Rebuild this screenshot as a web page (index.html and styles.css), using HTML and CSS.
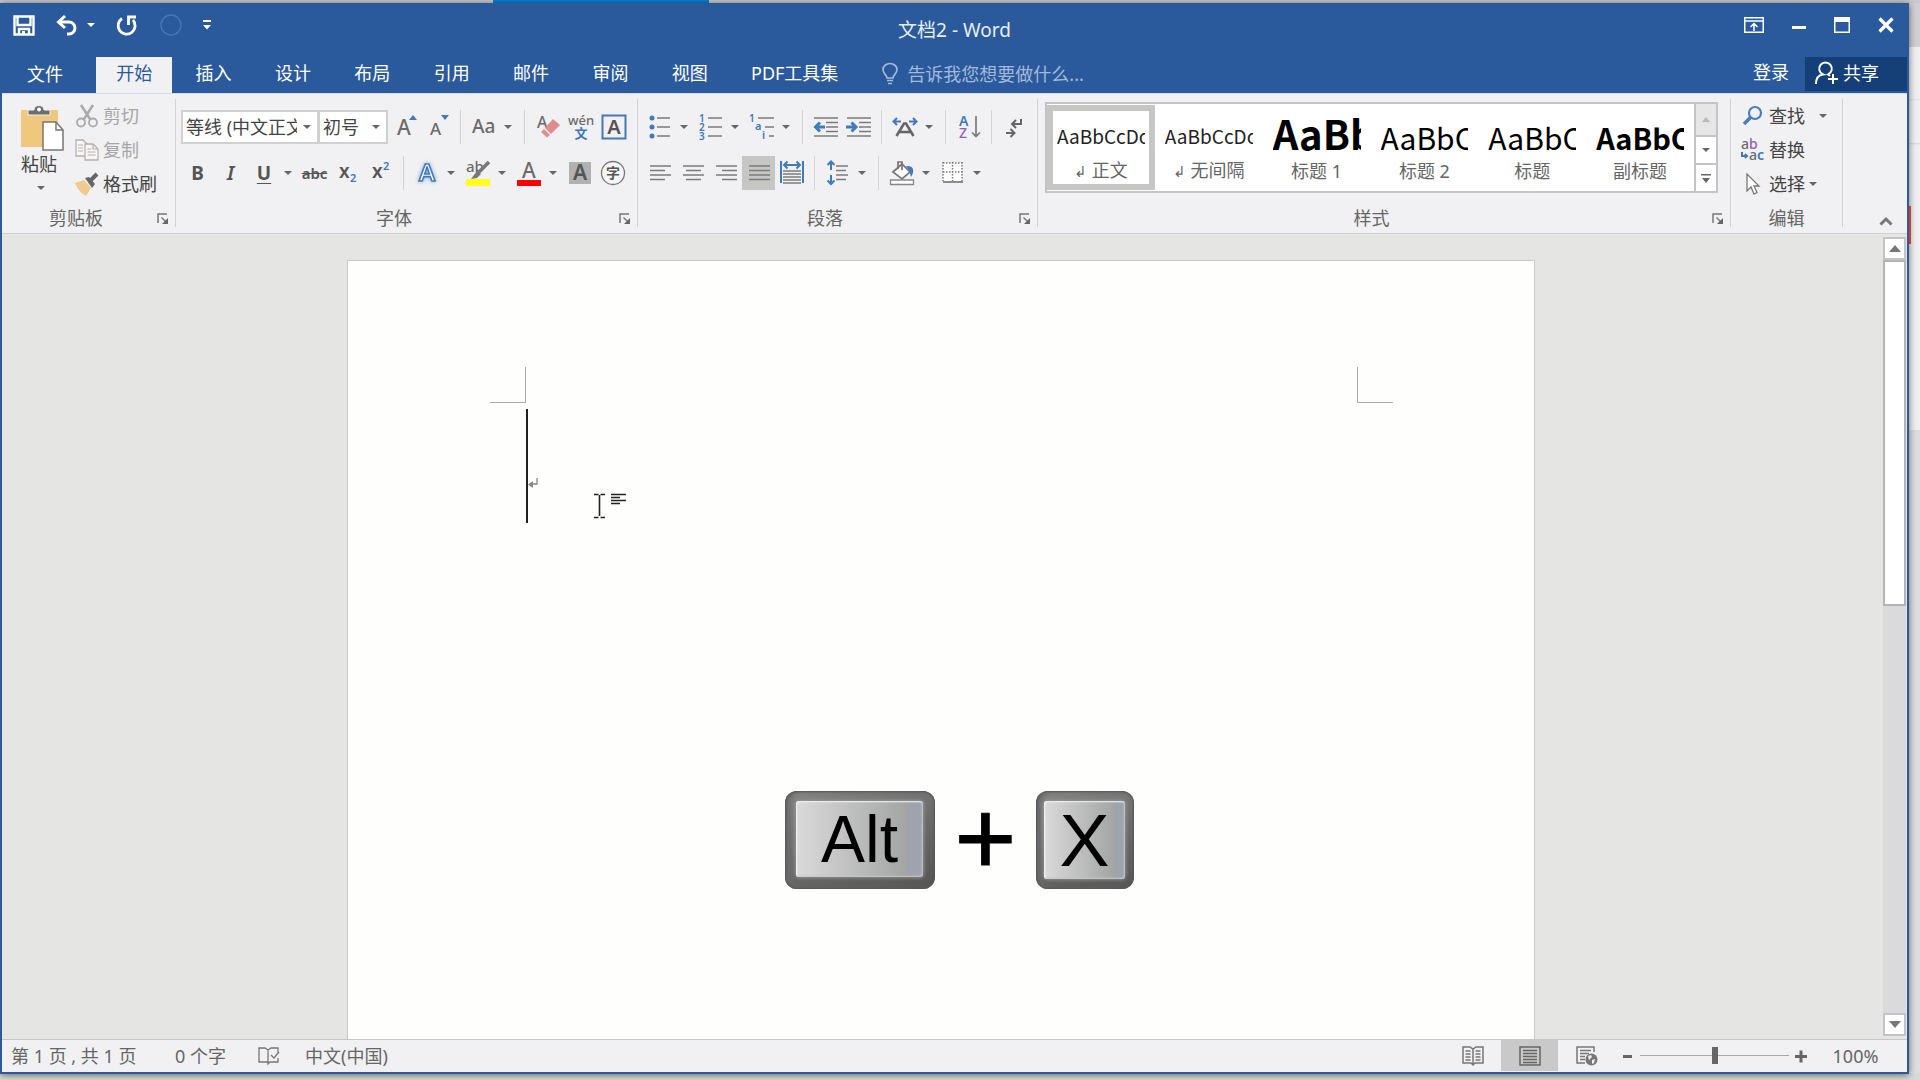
FILE: index.html
```html
<!DOCTYPE html>
<html lang="zh-CN">
<head>
<meta charset="utf-8">
<title>文档2 - Word</title>
<link rel="stylesheet" href="styles.css">
</head>
<body>
<svg class="sprite" aria-hidden="true">
  <symbol id="caret" viewBox="0 0 8 4"><path d="M0 0h8L4 4z"/></symbol>
  <symbol id="launcher" viewBox="0 0 11 11"><path d="M1 10V1h9" fill="none" stroke="#777" stroke-width="1.5"/><path d="M4.500 4.500l4 4" stroke="#777" stroke-width="1.500"/><path d="M11 5v6H5z" fill="#666"/></symbol>
</svg>

<div class="window">
  <header class="titlebar">
    <div class="quick">
      <button class="qbtn" aria-label="保存"><svg width="22" height="21" viewBox="0 0 22 21"><path d="M1.500 1.500h19v18h-19z M4.500 2v8h13V2 M6 19v-5h10v5" fill="none" stroke="#fff" stroke-width="2.400"/><path d="M9 16h3v4H9z" fill="#fff"/></svg></button>
      <button class="qbtn undo" aria-label="撤消"><svg width="22" height="20" viewBox="0 0 22 20"><path d="M2 7h11a6 6 0 0 1 0 12h-2" fill="none" stroke="#fff" stroke-width="3"/><path d="M9 1L2.500 7L9 13" fill="none" stroke="#fff" stroke-width="3"/></svg><svg class="qcaret" width="8" height="4"><use href="#caret"/></svg></button>
      <button class="qbtn" aria-label="重复"><svg width="22" height="21" viewBox="0 0 22 21"><path d="M6 3.500A8.500 8.500 0 1 0 17 5" fill="none" stroke="#fff" stroke-width="2.800"/><path d="M12.500 10V2H20" fill="none" stroke="#fff" stroke-width="2.800"/></svg></button>
      <button class="qbtn dim" aria-label="触摸模式"><svg width="22" height="22"><circle cx="11" cy="11" r="10" fill="none" stroke="#4a74b3" stroke-width="1.500"/></svg></button>
      <button class="qbtn last" aria-label="自定义快速访问工具栏"><svg width="8" height="10" viewBox="0 0 8 10"><path d="M0 0h8v2H0z M0 5h8L4 9.500z" fill="#fff"/></svg></button>
    </div>
    <h1 class="doc-title">文档2 - Word</h1>
    <div class="winctl">
      <button class="wbtn" aria-label="功能区显示选项"><svg width="20" height="16" viewBox="0 0 20 16"><path d="M.750 .750h18.500v14.500H.750z M1 4h18 M10 14V7 M6.500 10L10 6.500L13.500 10" fill="none" stroke="#fff" stroke-width="1.500"/></svg></button>
      <button class="wbtn" aria-label="最小化"><svg width="14" height="16"><path d="M0 9h14v3H0z" fill="#fff"/></svg></button>
      <button class="wbtn" aria-label="最大化"><svg width="16" height="16"><path d="M.750 .750h14.500v14.500H.750z" fill="none" stroke="#fff" stroke-width="1.500"/><path d="M0 0h16v5H0z" fill="#fff"/></svg></button>
      <button class="wbtn" aria-label="关闭"><svg width="16" height="16"><path d="M1.500 1.500l13 13M14.500 1.500l-13 13" stroke="#fff" stroke-width="3.200"/></svg></button>
    </div>
  </header>

  <nav class="tabrow">
    <button class="file-tab">文件</button>
    <div class="tabs">
      <button class="tab active">开始</button><button class="tab">插入</button><button class="tab">设计</button><button class="tab">布局</button><button class="tab">引用</button><button class="tab">邮件</button><button class="tab">审阅</button><button class="tab">视图</button>
    </div>
    <button class="tab pdf">PDF工具集</button>
    <label class="tellme"><svg width="16" height="22" viewBox="0 0 16 22"><path d="M5 15c0-3-4-4-4-8.500a7 6 0 0 1 14 0C15 11 11 12 11 15z M5 17.500h6 M6 20.500h4" fill="none" stroke="#a3b9da" stroke-width="1.700"/></svg><input type="text" placeholder="告诉我您想要做什么..."></label>
    <a class="login" href="#">登录</a>
    <button class="share"><svg width="24" height="24" viewBox="0 0 24 24"><path d="M1 23c0-6 3-9 7-9.500a6.300 6.300 0 1 1 5 0l2 1.500 M18 13v10 M13 18h10" fill="none" stroke="#fff" stroke-width="2"/></svg>共享</button>
  </nav>

  <div class="ribbon">
    <section class="group clipboard">
      <div class="group-body">
        <button class="paste"><svg width="44" height="46" viewBox="0 0 44 46"><path d="M0 5h37v37H0z" fill="#efc77d"/><path d="M7 10V5h6c0-6 10-6 10 0h6v5z" fill="#6d6d6d" stroke="#f1f1f3"/><circle cx="18" cy="4.500" r="2" fill="#fff"/><path d="M22 17h13l7 8v20H22z" fill="#fff" stroke="#777" stroke-width="1.500"/><path d="M35 17v8h7" fill="none" stroke="#777" stroke-width="1.500"/></svg><span>粘贴</span><svg class="caret" width="8" height="4"><use href="#caret"/></svg></button>
        <div class="clip-list">
          <button class="cmd off"><svg width="24" height="24" viewBox="0 0 24 24"><path d="M6 1l9 14M18 1L9 15" stroke="#aaa" stroke-width="2.500"/><circle cx="6" cy="18.500" r="4" fill="none" stroke="#aaa" stroke-width="1.800"/><circle cx="18" cy="18.500" r="4" fill="none" stroke="#aaa" stroke-width="1.800"/></svg>剪切</button>
          <button class="cmd off"><svg width="24" height="24" viewBox="0 0 24 24"><g fill="#fbf6f6" stroke="#b4b0b0" stroke-width="1.300"><path d="M1 2h7l4 4v12H1z"/><path d="M10 6h8l5 5v11H10z"/></g><path d="M18 6v5h5 M3 7h5M3 10h5M3 13h5 M12.500 11h4M12.500 14h8M12.500 17h8" fill="none" stroke="#b4b0b0" stroke-width="1.200"/></svg>复制</button>
          <button class="cmd"><svg width="24" height="24" viewBox="0 0 24 24"><path d="M0 11l9-3 7 8-5 8C7 22 2 17 0 11z" fill="#efcb8f"/><path d="M10 6l4-1 6 7-3 4z" fill="#666"/><path d="M15 9l7-7" stroke="#666" stroke-width="4"/></svg>格式刷</button>
        </div>
      </div>
      <footer class="group-foot"><h2>剪贴板</h2><button class="launcher" aria-label="剪贴板设置"><svg width="11" height="11"><use href="#launcher"/></svg></button></footer>
    </section>

    <section class="group font">
      <div class="group-body rows">
        <div class="toolrow">
          <div class="combo family"><select aria-label="字体"><option>等线 (中文正文)</option></select><svg class="caret" width="8" height="4"><use href="#caret"/></svg></div>
          <div class="combo size"><select aria-label="字号"><option>初号</option></select><svg class="caret" width="8" height="4"><use href="#caret"/></svg></div>
          <button class="tool first" aria-label="增大字号"><svg width="26" height="26"><text x="1" y="21" font-size="21" class="g">A</text><path d="M13 6h8l-4-5z" class="bf"/></svg></button>
          <button class="tool narrow" aria-label="减小字号"><svg width="26" height="26"><text x="3" y="21" font-size="17" class="g">A</text><path d="M14 1h8l-4 5z" class="bf"/></svg></button>
          <i class="sep"></i>
          <button class="split" aria-label="更改大小写"><svg width="26" height="26"><text x="1" y="19" font-size="19" class="g">Aa</text></svg><svg class="caret" width="8" height="4"><use href="#caret"/></svg></button>
          <i class="sep"></i>
          <button class="tool" aria-label="清除格式"><svg width="26" height="26"><text x="2" y="14" font-size="16" class="g">A</text><path d="M18 5l7 6-9 9-6-6z M9 15l6 6-3 2.500L6 18z" fill="#e08c8c"/></svg></button>
          <button class="tool" aria-label="拼音指南"><svg width="26" height="26"><text x="13" y="11" font-size="13" text-anchor="middle" class="g">wén</text><text x="13" y="24" font-size="13" text-anchor="middle" class="b">文</text></svg></button>
          <button class="tool" aria-label="字符边框"><svg width="26" height="26"><path d="M1.500 1.500h23v23h-23z" class="bs" fill="#f6f6f8"/><text x="13" y="20" font-size="20" text-anchor="middle" class="d">A</text></svg></button>
        </div>
        <div class="toolrow">
          <button class="tool" aria-label="加粗"><span class="glyph bold">B</span></button>
          <button class="tool" aria-label="倾斜"><span class="glyph ital">I</span></button>
          <button class="split" aria-label="下划线"><span class="glyph under">U</span><svg class="caret" width="8" height="4"><use href="#caret"/></svg></button>
          <button class="tool" aria-label="删除线"><span class="glyph strike">abc</span></button>
          <button class="tool" aria-label="下标"><svg width="26" height="26"><text x="4" y="18" font-size="19" class="d">x</text><text x="15" y="22" font-size="11" class="b">2</text></svg></button>
          <button class="tool" aria-label="上标"><svg width="26" height="26"><text x="4" y="18" font-size="19" class="d">x</text><text x="15" y="10" font-size="11" class="b">2</text></svg></button>
          <i class="sep"></i>
          <button class="split" aria-label="文本效果"><svg width="26" height="26"><text x="13" y="21" font-size="24" text-anchor="middle" class="glow">A</text></svg><svg class="caret" width="8" height="4"><use href="#caret"/></svg></button>
          <button class="split" aria-label="突出显示"><svg width="26" height="26"><text x="1" y="12" font-size="15" class="g">ab</text><path d="M24 2L13 13" stroke="#777" stroke-width="3.500"/><path d="M12 11l4 3-4 4-6 1z" fill="#777"/><path d="M1 19h24v7H1z" fill="#ffff1e"/></svg><svg class="caret" width="8" height="4"><use href="#caret"/></svg></button>
          <button class="split" aria-label="字体颜色"><svg width="26" height="26"><text x="13" y="18" font-size="21" text-anchor="middle" class="g">A</text><path d="M1 20h24v6H1z" fill="#f00"/></svg><svg class="caret" width="8" height="4"><use href="#caret"/></svg></button>
          <button class="tool" aria-label="字符底纹"><svg width="26" height="26"><path d="M2 2h22v22H2z" fill="#b1b1b1"/><text x="13" y="20" font-size="21" text-anchor="middle" class="d">A</text></svg></button>
          <button class="tool" aria-label="带圈字符"><svg width="26" height="26"><circle cx="13" cy="13" r="11.500" fill="#f6f6f8" stroke="#777" stroke-width="1.300"/><text x="13" y="18" font-size="14" text-anchor="middle" class="d">字</text></svg></button>
        </div>
      </div>
      <footer class="group-foot"><h2>字体</h2><button class="launcher" aria-label="字体设置"><svg width="11" height="11"><use href="#launcher"/></svg></button></footer>
    </section>

    <section class="group para">
      <div class="group-body rows">
        <div class="toolrow">
          <button class="split" aria-label="项目符号"><svg width="26" height="26"><g class="bf"><circle cx="5" cy="4" r="2.500"/><circle cx="5" cy="13" r="2.500"/><circle cx="5" cy="22" r="2.500"/></g><path d="M10 4h13M10 13h13M10 22h13" class="gs"/></svg><svg class="caret" width="8" height="4"><use href="#caret"/></svg></button>
          <button class="split" aria-label="编号"><svg width="26" height="26"><text x="1" y="8" font-size="10" class="b">1</text><text x="1" y="17" font-size="10" class="b">2</text><text x="1" y="26" font-size="10" class="b">3</text><path d="M10 4h14M10 13h14M10 22h14" class="gs"/></svg><svg class="caret" width="8" height="4"><use href="#caret"/></svg></button>
          <button class="split" aria-label="多级列表"><svg width="26" height="26"><text x="0" y="8" font-size="10" class="b">1</text><text x="6" y="16" font-size="11" class="b">a</text><text x="13" y="25" font-size="11" class="b">i</text><path d="M9 4h16M16 13h9M20 22h5" class="gs"/></svg><svg class="caret" width="8" height="4"><use href="#caret"/></svg></button>
          <i class="sep"></i>
          <button class="tool" aria-label="减少缩进量"><svg width="26" height="26"><path d="M1 4h24M13 8.500h12M13 13h12M13 17.500h12M1 22h24" class="gs"/><path d="M2 13h10M7 8.500L2.500 13L7 17.500" class="bs thick"/></svg></button>
          <button class="tool" aria-label="增加缩进量"><svg width="26" height="26"><path d="M1 4h24M13 8.500h12M13 13h12M13 17.500h12M1 22h24" class="gs"/><path d="M0 13h10M5.500 8.500L10 13L5.500 17.500" class="bs thick"/></svg></button>
          <i class="sep"></i>
          <button class="split" aria-label="中文版式"><svg width="26" height="26"><path d="M4.500 22L12 9.500h2L21.500 22M7.500 18h11" fill="none" stroke="#666" stroke-width="2.600"/><path d="M2 7.500h7M5 4L1.500 7.500L5 11M24 7.500h-7M21 4l3.500 3.500L21 11" class="bs"/></svg><svg class="caret" width="8" height="4"><use href="#caret"/></svg></button>
          <i class="sep"></i>
          <button class="tool" aria-label="排序"><svg width="26" height="26"><text x="3" y="12" font-size="14" class="b">A</text><text x="3" y="24" font-size="14" class="p">Z</text><path d="M20 2v20M16 18.500l4 4 4-4" class="gs"/></svg></button>
          <i class="sep"></i>
          <button class="tool" aria-label="显示编辑标记"><svg width="26" height="26"><path d="M19 5v5h-9M14 6l-4 4 4 4M4 19h8M8.500 15l4 4-4 4" class="gs mid"/></svg></button>
        </div>
        <div class="toolrow">
          <button class="tool" aria-label="左对齐"><svg width="26" height="26"><path d="M3 6h21M3 10.500h15M3 15h21M3 19.500h15" class="gs"/></svg></button>
          <button class="tool" aria-label="居中"><svg width="26" height="26"><path d="M3 6h21M6 10.500h15M3 15h21M6 19.500h15" class="gs"/></svg></button>
          <button class="tool" aria-label="右对齐"><svg width="26" height="26"><path d="M3 6h21M9 10.500h15M3 15h21M9 19.500h15" class="gs"/></svg></button>
          <button class="tool pressed" aria-label="两端对齐"><svg width="26" height="26"><path d="M3 6h21M3 10.500h21M3 15h21M3 19.500h21" class="gs"/></svg></button>
          <button class="tool" aria-label="分散对齐"><svg width="26" height="26"><path d="M2 1v22M24 1v22M5 5h16M8.500 1.500L5 5l3.500 3.500M17.500 1.500L21 5l-3.500 3.500" class="bs"/><path d="M4 11h18M4 14h18M4 17h18M4 20h18M4 23h18" class="gs"/></svg></button>
          <i class="sep"></i>
          <button class="split" aria-label="行距"><svg width="26" height="26"><path d="M6 2v8M2.500 5L6 1.500L9.500 5M6 15v9M2.500 20.500L6 24l3.500-3.500" class="bs"/><path d="M11 6h12M11 10.500h10M11 15h12M11 19.500h10" class="gs"/></svg><svg class="caret" width="8" height="4"><use href="#caret"/></svg></button>
          <i class="sep"></i>
          <button class="split" aria-label="底纹"><svg width="26" height="26"><path d="M4 12l9-8 8 8-8 7z" fill="#fff" stroke="#777" stroke-width="1.700"/><path d="M9 9V2h4v8" fill="none" stroke="#777" stroke-width="1.700"/><path d="M17 6c8-1 9 5 5 11-1-4-2-8-5-11z" class="bf"/><path d="M1.500 20h23v4.500h-23z" fill="#fff" stroke="#888" stroke-width="1.300"/></svg><svg class="caret" width="8" height="4"><use href="#caret"/></svg></button>
          <button class="split" aria-label="边框"><svg width="26" height="26"><path d="M3 3h19v18H3z" fill="#fff"/><path d="M3 3h20M3 12h20M3 2v19M12.500 2v19M22 2v19" fill="none" stroke="#777" stroke-width="1.500" stroke-dasharray="1.500 1.500"/><path d="M3 22h20" class="gs"/></svg><svg class="caret" width="8" height="4"><use href="#caret"/></svg></button>
        </div>
      </div>
      <footer class="group-foot"><h2>段落</h2><button class="launcher" aria-label="段落设置"><svg width="11" height="11"><use href="#launcher"/></svg></button></footer>
    </section>

    <section class="group styles">
      <div class="group-body">
        <div class="gallery">
          <div class="style-grid">
            <button class="style chosen"><span class="prev">AaBbCcDc</span><span class="name"><small>↲</small> 正文</span></button>
            <button class="style"><span class="prev">AaBbCcDc</span><span class="name"><small>↲</small> 无间隔</span></button>
            <button class="style"><span class="prev h1">AaBb</span><span class="name">标题 1</span></button>
            <button class="style"><span class="prev h2">AaBbC</span><span class="name">标题 2</span></button>
            <button class="style"><span class="prev h2">AaBbC</span><span class="name">标题</span></button>
            <button class="style"><span class="prev sub">AaBbC</span><span class="name">副标题</span></button>
          </div>
          <div class="gallery-nav">
            <button class="off" aria-label="上一行"><svg width="8" height="5"><path d="M0 5h8L4 0z" fill="#b8b8b8"/></svg></button>
            <button aria-label="下一行"><svg class="caret" width="8" height="4"><use href="#caret"/></svg></button>
            <button aria-label="其他"><svg width="10" height="9"><path d="M0 0h10v1.500H0z M1 4h8L5 9z" fill="#666"/></svg></button>
          </div>
        </div>
      </div>
      <footer class="group-foot"><h2>样式</h2><button class="launcher" aria-label="样式设置"><svg width="11" height="11"><use href="#launcher"/></svg></button></footer>
    </section>

    <section class="group editing">
      <div class="group-body edit-list">
        <button class="cmd"><svg width="24" height="24" viewBox="0 0 24 24"><circle cx="14" cy="9" r="6" fill="none" stroke="#4a7dba" stroke-width="2.200"/><path d="M10 13L3 20" stroke="#4a7dba" stroke-width="3.500"/></svg>查找<svg class="caret far" width="8" height="4"><use href="#caret"/></svg></button>
        <button class="cmd"><svg width="24" height="24" viewBox="0 0 24 24"><text x="0" y="11" font-size="14" class="g">a</text><text x="8" y="11" font-size="14" class="p">b</text><text x="8" y="22" font-size="14" class="g">a</text><text x="16" y="22" font-size="14" class="b">c</text><path d="M1 14v4h5M4 16l2 2-2 2" class="bs"/></svg>替换</button>
        <button class="cmd"><svg width="24" height="24" viewBox="0 0 24 24"><path d="M6 2v17l4-4 3 7 3-1.500-3-6.500h5z" fill="#fff" stroke="#777" stroke-width="1.300"/></svg>选择<svg class="caret" width="8" height="4"><use href="#caret"/></svg></button>
      </div>
      <footer class="group-foot"><h2>编辑</h2></footer>
    </section>
    <button class="collapse" aria-label="折叠功能区"><svg width="14" height="10"><path d="M1.500 8.500L7 3l5.500 5.500" fill="none" stroke="#777" stroke-width="3"/></svg></button>
  </div>

  <main class="workspace">
    <div class="canvas">
      <article class="sheet">
        <div class="corners"><i class="corner l"></i><i class="corner r"></i></div>
        <div class="line"><svg class="ret" width="10" height="11"><path d="M9 0v6H3" fill="none" stroke="#888" stroke-width="1.300"/><path d="M5 3v7L0 6.500z" fill="#888"/></svg>
          <svg class="ibeam" width="34" height="26"><path d="M0 1.500h4.500M6.500 1.500H11M5.500 2v21M0 24.500h4.500M6.500 24.500H11" stroke="#222" stroke-width="1.600"/><path d="M17 1.500h15M17 4.500h9M17 7.500h15M17 10.500h9" stroke="#222" stroke-width="1.700"/></svg>
        </div>
      </article>
    </div>
    <div class="scroll">
      <button class="arrow" aria-label="向上滚动"><svg width="12" height="7"><path d="M0 7h12L6 0z" fill="#777"/></svg></button>
      <div class="track"><div class="thumb"></div></div>
      <button class="arrow" aria-label="向下滚动"><svg width="12" height="7"><path d="M0 0h12L6 7z" fill="#777"/></svg></button>
    </div>
  </main>

  <footer class="status">
    <span class="pages">第 1 页 , 共 1 页</span>
    <span class="words">0 个字</span>
    <svg class="proof" width="22" height="20"><path d="M10 16H1V2h6l3 2 3-2h7v5M10 4v14l2-2h8v-4M13 9l3 3 5-6" fill="none" stroke="#777" stroke-width="1.300"/></svg>
    <span class="lang">中文(中国)</span>
    <div class="views">
      <button class="view" aria-label="阅读视图"><svg width="22" height="20"><path d="M1 1h7l3 2 3-2h7v16h-8l-2 2-2-2H1zM11 3v15M3.500 5h5M3.500 8h5M3.500 11h5M3.500 14h5M13.500 5h5M13.500 8h5M13.500 11h5M13.500 14h5" fill="none" stroke="#777" stroke-width="1.500"/></svg></button>
      <button class="view on" aria-label="页面视图"><svg width="22" height="20"><path d="M1 1h20v18H1zM4 4.500h14M4 7.500h14M4 10.500h14M4 13.500h14M4 16.500h14" fill="none" stroke="#666" stroke-width="1.500"/></svg></button>
      <button class="view" aria-label="Web 版式视图"><svg width="22" height="20"><path d="M9 17H1V1h17v5M4 4.500h11M4 7.500h9M4 10.500h5M4 13.500h5" fill="none" stroke="#777" stroke-width="1.500"/><circle cx="15.500" cy="13.500" r="6" fill="#777"/><path d="M12 10l3-1 1 2-3 3zM16 14l3-1-1 4-2 1z" fill="#f1f1f3"/></svg></button>
    </div>
    <button class="zoombtn" aria-label="缩小"><svg width="14" height="14"><path d="M2 6h9v3H2z" fill="#666"/></svg></button>
    <input class="zoom" type="range" min="0" max="100" value="50" aria-label="显示比例">
    <button class="zoombtn" aria-label="放大"><svg width="14" height="14"><path d="M1 6h12v3H1zM5.500 1.500h3v12h-3z" fill="#666"/></svg></button>
    <button class="percent">100%</button>
  </footer>
</div>

<div class="behind" aria-hidden="true"><i class="red"></i></div>

<div class="shortcut">
  <kbd class="key alt"><span class="face">Alt</span></kbd><span class="plus">+</span><kbd class="key x"><span class="face">X</span></kbd>
</div>
</body>
</html>
```
FILE: styles.css
```css
* { box-sizing: border-box; }
:root {
  --blue: #2b5a9c;
  --accent: #4279b8;
  --panel: #f1f1f3;
  --grey: #666;
}
body {
  margin: 0;
  min-height: 100vh;
  position: relative;
  overflow: hidden;
  display: grid;
  grid-template-columns: minmax(0, 1fr) 11px;
  padding: 3px 0 6px;
  background: linear-gradient(90deg, #c9cacb 493px, #0c7fd4 493px, #0c7fd4 709px, #c9cacb 709px) 0 0 / 100% 3px no-repeat, #d9d9da;
  font: 18px/24px "Noto Sans", "Noto Sans CJK SC", sans-serif;
  color: #444;
}
button {
  font: inherit;
  color: inherit;
  background: none;
  border: 0;
  padding: 0;
  display: flex;
  align-items: center;
  justify-content: center;
}
svg { display: block; flex: none; overflow: visible; }
h1, h2 { margin: 0; font: inherit; }
.sprite { position: absolute; width: 0; height: 0; }
.caret { fill: #666; }

.window {
  min-height: calc(100vh - 9px);
  display: flex;
  flex-direction: column;
  border: solid var(--blue);
  border-width: 0 2px 2px;
  box-shadow: 0 1px 7px rgba(0, 0, 0, .55);
  z-index: 1;
}

/* title bar */
.titlebar {
  height: 54px;
  background: var(--blue);
  display: grid;
  grid-template-columns: 1fr auto 1fr;
  color: #e8eef7;
}
.quick { display: flex; height: 44px; padding-left: 11px; align-items: center; gap: 21px; }
.qcaret { fill: #fff; margin-left: 9px; }
.undo { width: 39px; }
.dim { margin-left: 1px; }
.doc-title { align-self: center; font-size: 19px; }
.winctl { display: flex; height: 44px; align-items: center; justify-content: flex-end; gap: 28px; padding-right: 13px; }

/* tabs */
.tabrow { height: 36px; background: var(--blue); color: #fff; display: flex; }
.file-tab { width: 86px; padding-bottom: 3px; }
.tabs { width: 632px; margin-left: 8px; display: grid; grid-template-columns: repeat(8, 1fr); gap: 3px; }
.tab { padding-bottom: 5px; }
.tab.active { background: var(--panel); color: var(--blue); }
.pdf { margin: 0 20px 0 23px; }
.tellme { display: flex; align-items: center; gap: 9px; padding: 0 0 2px 24px; }
.tellme input { width: 190px; border: 0; padding: 0; background: none; font: inherit; color: #fff; }
.tellme input::placeholder { color: #a3b9da; opacity: 1; }
.login { margin-left: auto; color: #fff; text-decoration: none; padding: 3px 16px; }
.share { width: 102px; height: 34px; background: #143f77; gap: 4px; padding: 0 18px 2px 0; }

/* ribbon */
.ribbon {
  display: flex;
  height: 141px;
  padding-top: 5px;
  background: var(--panel);
  border-top: 1px solid #d4dcea;
  border-bottom: 1px solid #cfd0d2;
}
.group { display: flex; flex-direction: column; border-right: 1px solid #d2d2d3; height: 128px; }
.group-body { height: 106px; display: flex; }
.group-foot { display: flex; align-items: center; color: #666; line-height: 22px; height: 22px; padding-top: 4px; }
.group-foot h2 { flex: 1; text-align: center; }
.launcher { width: 25px; }
.clipboard { width: 174px; }
.font { width: 462px; }
.para { width: 400px; }
.styles { flex: 1; min-width: 0; }
.editing { width: 112px; }

.paste { flex-direction: column; width: 52px; margin-left: 11px; justify-content: flex-start; padding-top: 6px; }
.paste span { line-height: 26px; }
.paste .caret { margin-top: 9px; margin-left: 4px; }
.paste svg:first-child { margin-left: 8px; }
.clip-list { padding-left: 10px; }
.cmd { height: 34px; gap: 4px; color: #444; }
.cmd.off { color: #a6a6a6; }
.cmd .caret.far { margin-left: 10px; }

.rows { flex-direction: column; gap: 12px; padding: 11px 0 0 5px; }
.toolrow { display: flex; align-items: center; height: 34px; }
.tool { width: 33px; height: 34px; }
.tool.first { margin-left: 4px; }
.tool.narrow { width: 29px; }
.tool.pressed { background: #c6c6c5; }
.split { width: 51px; height: 34px; justify-content: flex-start; padding-left: 4px; }
.split .caret { margin-left: 7px; }
.split .glyph { width: 26px; }
.sep { width: 1px; height: 34px; background: #d2d2d3; margin: 0 6px; flex: none; }
.combo { height: 34px; background: #fff; border: 2px solid #d0d0d1; display: flex; align-items: center; justify-content: space-between; padding: 0 6px 0 3px; }
.combo.family { width: 138px; }
.combo.size { width: 70px; margin-left: -1px; }
.combo select { appearance: none; border: 0; background: none; padding: 0; margin: 0; width: 111px; font: inherit; color: #444; overflow: hidden; text-overflow: clip; }
.combo.size select { width: 45px; }

.glyph { font-size: 19px; text-align: center; color: #555; }
.bold { font-weight: 700; }
.ital { font: italic 600 20px/24px "Noto Sans", sans-serif; }
.under { font-weight: 700; text-decoration: underline; text-underline-offset: 3px; text-decoration-thickness: 1px; }
.strike { font-size: 15px; font-weight: 600; text-decoration: line-through; }
.g { fill: #6b6b6b; font-weight: 500; }
.d { fill: #555; font-weight: 600; }
.b { fill: #3f76b8; font-weight: 600; }
.p { fill: #9560b0; font-weight: 500; }
.glow { fill: #fff; stroke: #4279b8; stroke-width: 1.6px; font-weight: 600; filter: drop-shadow(0 0 2px #7eaede); }
.bf { fill: var(--accent); }
.bs { fill: none; stroke: var(--accent); stroke-width: 2px; }
.thick { stroke-width: 3px; }
.gs { fill: none; stroke: #7b7b7b; stroke-width: 1.7px; }
.mid { stroke: #666; stroke-width: 2px; }

/* style gallery */
.gallery { flex: 1; min-width: 0; height: 91px; margin: 3px 12px 0 7px; background: #fff; border: 2px solid #c4c4c5; display: flex; }
.style-grid { flex: 1; min-width: 0; display: grid; grid-template-columns: repeat(6, minmax(0, 1fr)); padding: 1px 0; }
.style { flex-direction: column; align-items: stretch; justify-content: flex-end; border: 6px solid transparent; padding: 0 4px; }
.style.chosen { border-color: #c6c6c5; }
.prev { overflow: hidden; white-space: nowrap; text-align: left; color: #222; font: 19px/42px "Noto Sans CJK SC", sans-serif; }
.prev.h1 { font-size: 40px; line-height: 50px; margin-top: -6px; font-weight: 700; color: #000; }
.prev.h2 { font-size: 30px; color: #000; }
.prev.sub { font-size: 29px; font-weight: 700; color: #000; }
.name { color: #666; line-height: 26px; white-space: nowrap; }
.name small { font-size: 15px; }
.gallery-nav { width: 22px; display: grid; grid-template-rows: 31px 28px 28px; border-left: 2px solid #c4c4c5; }
.gallery-nav button + button { border-top: 2px solid #c4c4c5; }
.gallery-nav .off { background: #e6e6e6; }

.edit-list { flex-direction: column; align-items: flex-start; padding-left: 10px; }
.collapse { width: 64px; padding-left: 22px; align-items: flex-end; padding-bottom: 7px; }

/* document */
.workspace { flex: 1; display: flex; background: #e5e5e4; min-height: 0; }
.canvas { flex: 1; display: flex; justify-content: center; padding: 26px 3px 0 0; }
.sheet { width: 100%; max-width: 1188px; background: #fefefd; border: 1px solid #cacaca; border-bottom: 0; padding: 106px 141px 0 142px; }
.corners { display: flex; justify-content: space-between; }
.corner { width: 36px; height: 36px; border-bottom: 1px solid #aaaab0; }
.corner.l { border-right: 1px solid #aaaab0; }
.corner.r { border-left: 1px solid #aaaab0; }
.line { position: relative; height: 114px; margin: 6px 0 0 36px; border-left: 2px solid #222; padding-top: 69px; }
.ibeam { position: absolute; left: 66px; top: 84px; }
.scroll { width: 23px; margin: 3px 1px 3px 0; display: flex; flex-direction: column; }
.arrow { height: 23px; background: #fff; border: 2px solid #c4c4c6; }
.track { flex: 1; background: #dadadc; }
.thumb { height: 46%; background: #fff; border: 2px solid #b4b4b6; }

/* status bar */
.status { height: 33px; display: flex; align-items: center; background: var(--panel); border-top: 1px solid #c6c6c8; padding: 0 4px 1px 9px; color: #666; white-space: nowrap; }
.pages { width: 164px; }
.words { width: 83px; }
.lang { margin-left: 25px; }
.views { display: flex; height: 100%; margin-left: auto; }
.view { width: 57px; }
.view.on { background: #c9c9ca; }
.zoombtn { width: 14px; }
.zoom { appearance: none; width: 149px; height: 20px; margin: 0 5px; background: linear-gradient(#a8a8a8, #a8a8a8) center / 100% 1px no-repeat; }
.zoom::-webkit-slider-thumb { appearance: none; width: 6px; height: 17px; background: #666; }
.views + .zoombtn { margin-left: 6px; }
.percent { width: 95px; }

/* strip of the window lying underneath */
.behind { background: linear-gradient(#d0d0d2 44px, #f0f0f0 44px, #f0f0f0 96px, #dcdcde 96px, #f0f0f0 98px, #f0f0f0 140px, #d5d5d6 140px, #f0f0f0 142px, #f0f0f0 427px, #dedee0 427px); padding-top: 203px; }
.red { display: block; width: 2px; height: 38px; background: #d43a2f; position: relative; z-index: 2; }

/* keyboard shortcut overlay */
.shortcut { position: absolute; z-index: 3; left: 0; right: 0; bottom: 191px; display: flex; justify-content: center; align-items: center; gap: 24px; padding-right: 1px; pointer-events: none; color: #000; font-family: "Liberation Sans", Arial, sans-serif; }
.key {
  height: 98px;
  padding: 10px 12px 12px 11px;
  display: flex;
  border-radius: 12px;
  background: linear-gradient(160deg, #868687, #6e6e6f 45%, #555556);
  box-shadow: inset 0 0 2px 1px #555, inset 5px 0 5px #6b6b6c;
  font: 66px/76px "Liberation Sans", Arial, sans-serif;
}
.face {
  flex: 1;
  display: flex;
  align-items: center;
  justify-content: center;
  border-radius: 3px;
  background: linear-gradient(90deg, #dadadb, #a3a4a4 87%, #9fa3ad 88%);
  box-shadow: inset 1px 1px 2px #f4f4f4, inset -1px -1px 2px #c4c4c6, 0 0 4px #a8a8a9;
}
.key.alt { width: 150px; }
.key.x { width: 98px; padding: 10px 9px 10px 8px; font-size: 75px; }
.plus { width: 53px; height: 98px; display: flex; justify-content: center; font-size: 106px; line-height: 92px; -webkit-text-stroke: 1px #000; }
```
